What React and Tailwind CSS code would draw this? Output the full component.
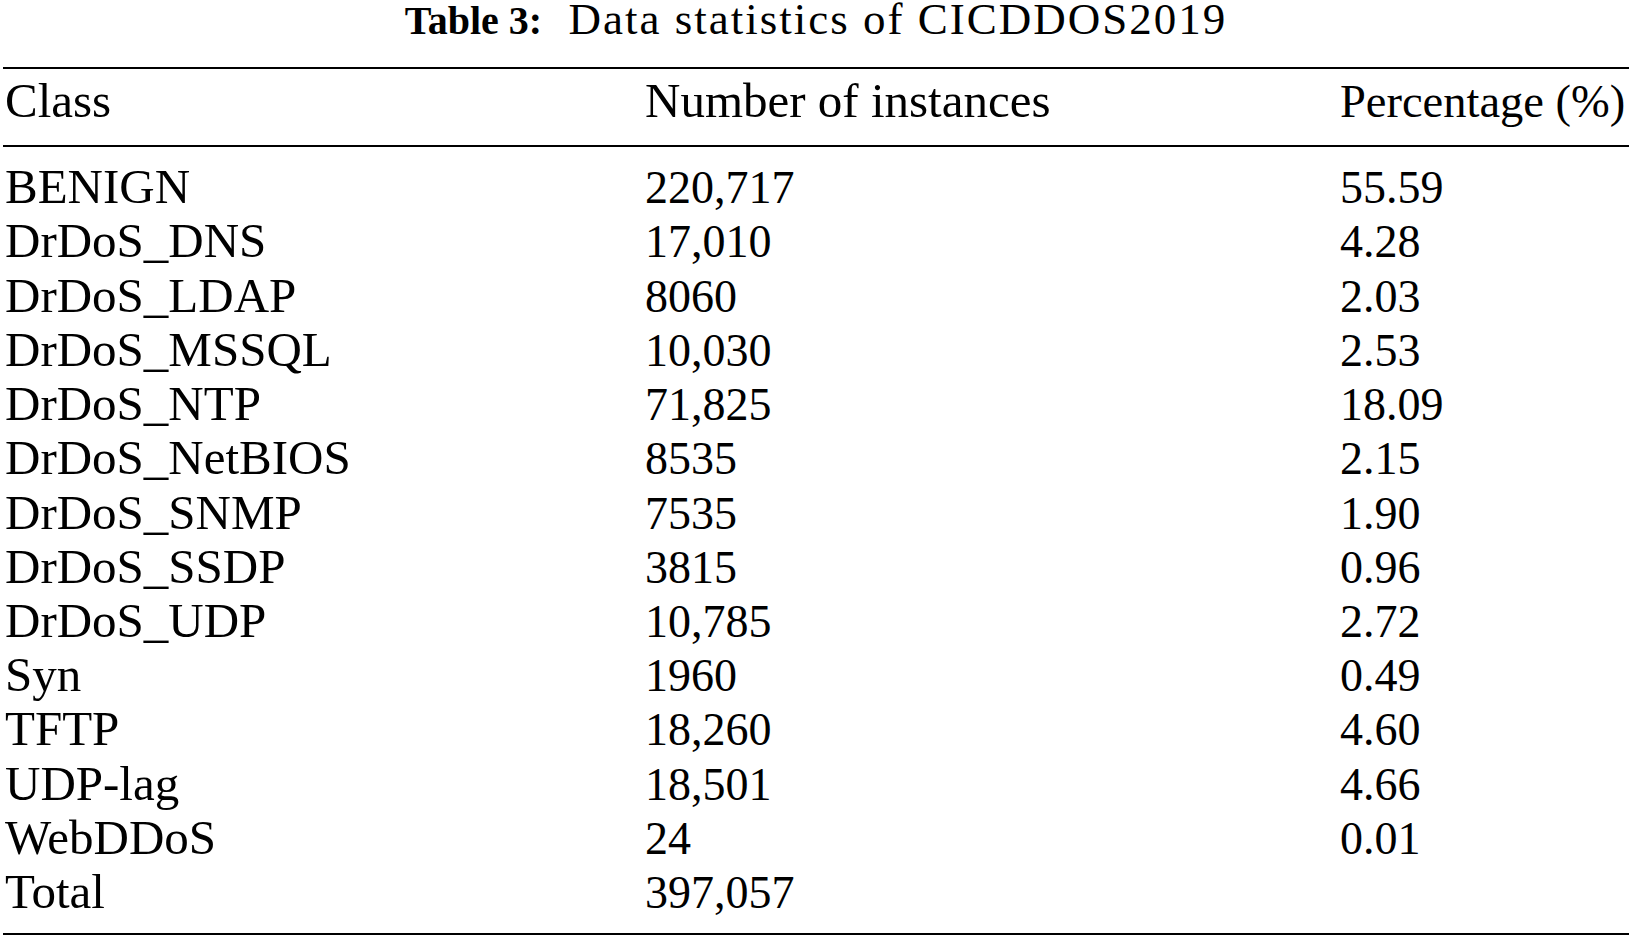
import React from "react";

const rows = [
  ["BENIGN", "220,717", "55.59"],
  ["DrDoS_DNS", "17,010", "4.28"],
  ["DrDoS_LDAP", "8060", "2.03"],
  ["DrDoS_MSSQL", "10,030", "2.53"],
  ["DrDoS_NTP", "71,825", "18.09"],
  ["DrDoS_NetBIOS", "8535", "2.15"],
  ["DrDoS_SNMP", "7535", "1.90"],
  ["DrDoS_SSDP", "3815", "0.96"],
  ["DrDoS_UDP", "10,785", "2.72"],
  ["Syn", "1960", "0.49"],
  ["TFTP", "18,260", "4.60"],
  ["UDP-lag", "18,501", "4.66"],
  ["WebDDoS", "24", "0.01"],
  ["Total", "397,057", ""],
];

export default function App() {
  return (
    <div
      className="w-[1632px] h-[940px] bg-white text-black overflow-hidden"
      style={{ fontFamily: '"Liberation Serif", "Times New Roman", serif' }}
    >
      <div className="h-[38px] text-center leading-[38px] whitespace-nowrap">
        <span className="font-bold text-[40px]">Table 3:</span>
        <span className="text-[45px] tracking-[2px]">&nbsp; Data statistics of CICDDOS2019</span>
      </div>

      <div className="mx-[3px] mt-[29px]">
        <div className="border-t-2 border-black" />
        <div className="pt-[5px] pb-[17px]">
          <div className="grid h-[54.23px] grid-cols-[640px_695px_1fr] items-baseline overflow-hidden pl-[2px] leading-[54.23px] whitespace-nowrap">
            <div className="text-[49px]">Class</div>
            <div className="text-[49px]">Number of instances</div>
            <div className="text-[46.5px]">Percentage (%)</div>
          </div>
        </div>
        <div className="border-t-2 border-black" />
        <div className="pt-[13px] pb-[14px]">
          {rows.map((r) => (
            <div
              key={r[0]}
              className="grid h-[54.23px] grid-cols-[640px_695px_1fr] items-baseline pl-[2px] leading-[54.23px] whitespace-nowrap"
            >
              <div className="text-[49px]">{r[0]}</div>
              <div className="text-[46px]">{r[1]}</div>
              <div className="text-[46px]">{r[2]}</div>
            </div>
          ))}
        </div>
        <div className="border-t-2 border-black" />
      </div>
    </div>
  );
}
